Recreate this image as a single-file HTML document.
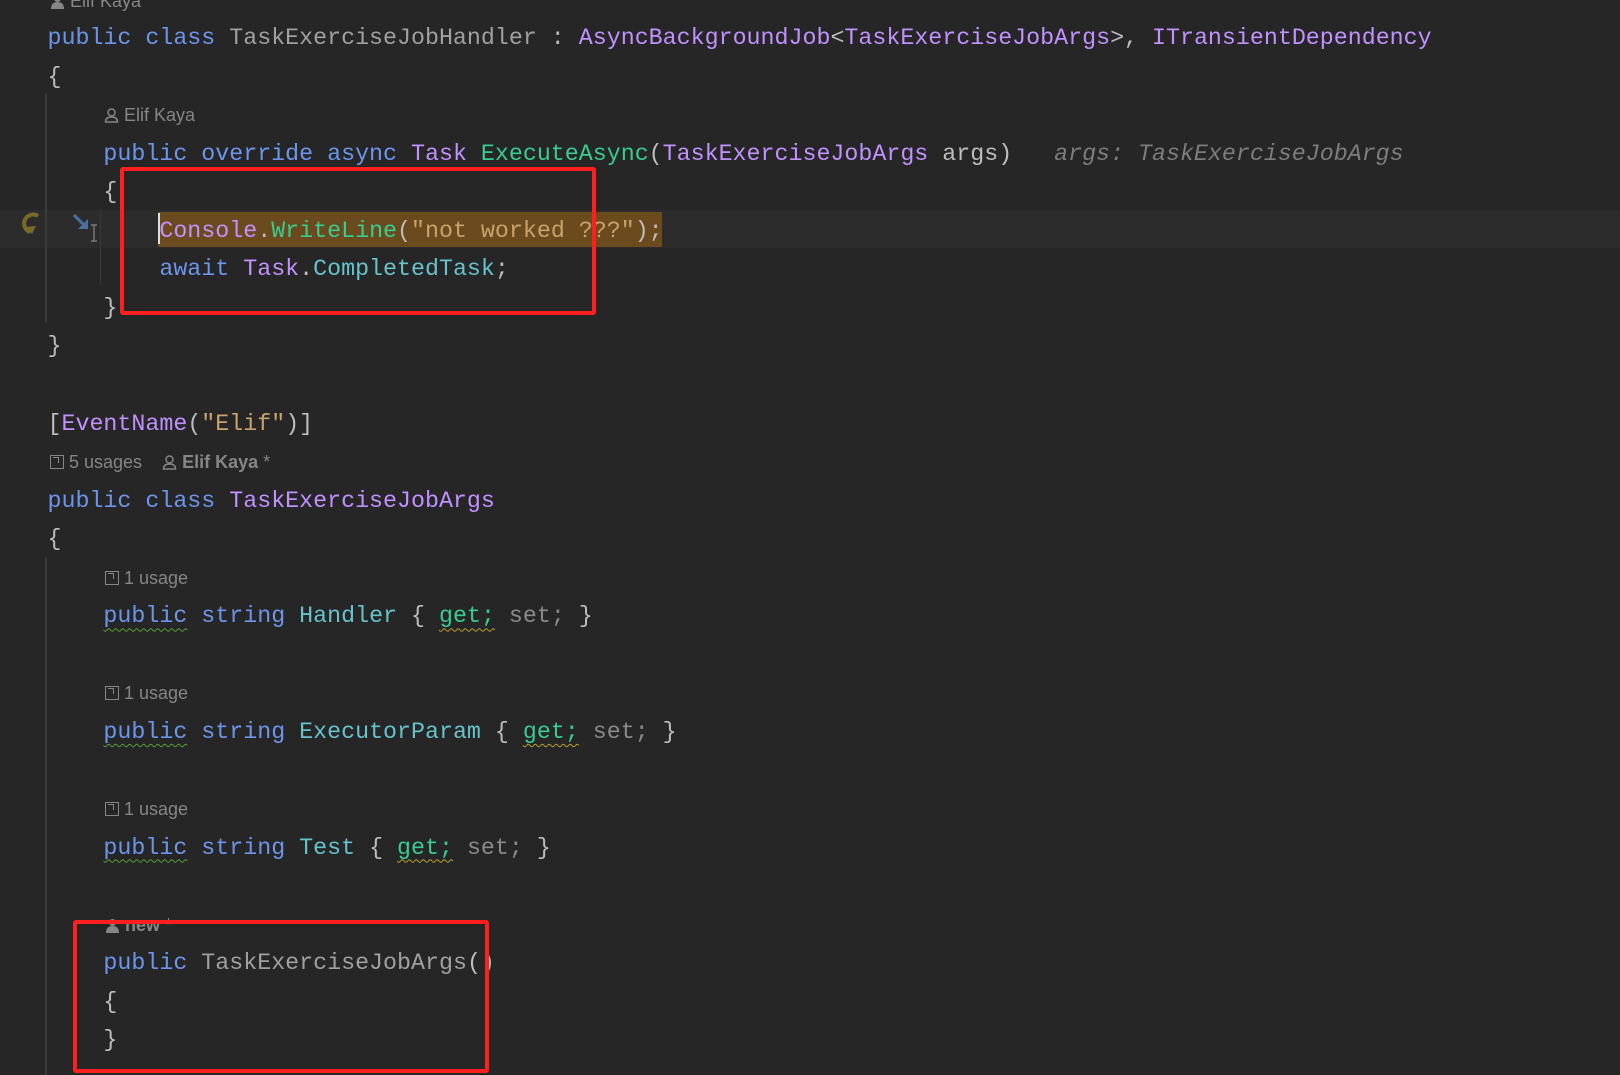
<!DOCTYPE html>
<html><head><meta charset="utf-8"><style>
html,body{margin:0;padding:0;background:#262626;width:1620px;height:1075px;overflow:hidden;position:relative}
.wrap{position:absolute;left:0;top:1.5px;width:1620px;height:1075px}
.l{position:absolute;left:47.5px;height:38.55px;line-height:38.55px;white-space:pre;font-family:"Liberation Mono",monospace;font-size:23.3px;color:#bdbdbd}
.h{font-family:"Liberation Sans",sans-serif;font-size:18px;color:#868686}
.k{color:#6c95eb}.c{color:#c191ff}.m{color:#39cc8f}.s{color:#c9a26d}.p{color:#66c3cc}.g{color:#8a8a8a}.u{color:#a0a0a0}
.w{text-decoration:underline wavy #5a9e3a;text-underline-offset:5px;text-decoration-thickness:1px}
.wy{text-decoration:underline wavy #b5a12e;text-underline-offset:5px;text-decoration-thickness:1px}
.box{position:absolute;border:4px solid #ff1f1f;border-radius:3px;box-sizing:border-box}
.vl{position:absolute;width:2px;background:#3a3a3a}
.ic{display:inline-block;width:14px;height:14px;border:1.5px solid #868686;box-sizing:border-box;vertical-align:-1px;margin-right:5px;position:relative}
.ic:after{content:"";position:absolute;left:2px;top:1px;width:6px;height:6px;border-top:1.5px solid #868686;border-right:1.5px solid #868686;box-sizing:border-box}
.pi{display:inline-block;vertical-align:-2px;margin-right:5px}
</style></head><body>
<div style="position:absolute;left:0;top:210px;width:1620px;height:38px;background:#2c2c2c"></div>
<div style="position:absolute;left:158px;top:212px;width:504px;height:35px;background:#6b4b1e"></div>
<div style="position:absolute;left:158px;top:213px;width:2px;height:31px;background:#e0e0e0"></div>
<div class="vl" style="left:45px;top:94px;height:228px"></div>
<div class="vl" style="left:45px;top:557px;height:518px"></div>
<div class="vl" style="left:100px;top:210px;height:75px;width:1px"></div>
<svg style="position:absolute;left:20px;top:210px" width="28" height="30" viewBox="0 0 28 30"><path d="M18 6 A9 9 0 1 0 10 22" fill="none" stroke="#7a6a28" stroke-width="4"/><path d="M5 17 L12 24 L16 16 Z" fill="#7a6a28"/></svg>
<svg style="position:absolute;left:72px;top:213px" width="34" height="30" viewBox="0 0 34 30"><path d="M2 2 L14 14" stroke="#4a6fa0" stroke-width="3"/><path d="M16 6 L16 16 L6 16 Z" fill="#4a6fa0"/><path d="M22 12 V28 M19 12 H25 M19 28 H25" stroke="#777" stroke-width="1.5" fill="none"/></svg>
<div class="wrap">
<div class="l h" style="top:-20px;left:50px"><svg class="pi" width="15" height="15" viewBox="0 0 15 15"><circle cx="7.5" cy="4.5" r="3.5" fill="#868686"/><path d="M1 15 Q1 8 7.5 8 Q14 8 14 15Z" fill="#868686"/></svg>Elif Kaya</div>
<div class="l" style="top:17.5px"><span class="k">public class</span> <span class="u">TaskExerciseJobHandler</span> : <span class="c">AsyncBackgroundJob</span>&lt;<span class="c">TaskExerciseJobArgs</span>&gt;, <span class="c">ITransientDependency</span></div>
<div class="l" style="top:56px">{</div>
<div class="l h" style="top:94.6px;left:104px"><svg class="pi" width="15" height="15" viewBox="0 0 15 15"><circle cx="7.5" cy="4.5" r="3.5" fill="none" stroke="#868686" stroke-width="1.5"/><path d="M1.5 14 Q1.5 9 7.5 9 Q13.5 9 13.5 14Z" fill="none" stroke="#868686" stroke-width="1.5"/></svg>Elif Kaya</div>
<div class="l" style="top:133.1px">    <span class="k">public override async</span> <span class="c">Task</span> <span class="m">ExecuteAsync</span>(<span class="c">TaskExerciseJobArgs</span> args)  <i class="g" style="color:#7d7d7d"> args: TaskExerciseJobArgs</i></div>
<div class="l" style="top:171.7px">    {</div>
<div class="l" style="top:210.3px">        <span class="c">Console</span>.<span class="m">WriteLine</span>(<span class="s">"not worked ???"</span>);</div>
<div class="l" style="top:248.8px">        <span class="k">await</span> <span class="c">Task</span>.<span class="p">CompletedTask</span>;</div>
<div class="l" style="top:287.4px">    }</div>
<div class="l" style="top:325.9px">}</div>
<div class="l" style="top:403px">[<span class="c">EventName</span>(<span class="s">"Elif"</span>)]</div>
<div class="l h" style="top:441.6px;left:50px"><span class="ic"></span>5 usages &nbsp;&nbsp; <svg class="pi" width="15" height="15" viewBox="0 0 15 15"><circle cx="7.5" cy="4.5" r="3.5" fill="none" stroke="#868686" stroke-width="1.5"/><path d="M1.5 14 Q1.5 9 7.5 9 Q13.5 9 13.5 14Z" fill="none" stroke="#868686" stroke-width="1.5"/></svg><b>Elif Kaya</b> *</div>
<div class="l" style="top:480.2px"><span class="k">public class</span> <span class="c">TaskExerciseJobArgs</span></div>
<div class="l" style="top:518.7px">{</div>
<div class="l h" style="top:557.3px;left:105px"><span class="ic"></span>1 usage</div>
<div class="l" style="top:595.8px">    <span class="k w">public</span> <span class="k">string</span> <span class="p">Handler</span> { <span class="m wy">get;</span> <span class="g">set;</span> }</div>
<div class="l h" style="top:672.9px;left:105px"><span class="ic"></span>1 usage</div>
<div class="l" style="top:711.5px">    <span class="k w">public</span> <span class="k">string</span> <span class="p">ExecutorParam</span> { <span class="m wy">get;</span> <span class="g">set;</span> }</div>
<div class="l h" style="top:788.6px;left:105px"><span class="ic"></span>1 usage</div>
<div class="l" style="top:827.2px">    <span class="k w">public</span> <span class="k">string</span> <span class="p">Test</span> { <span class="m wy">get;</span> <span class="g">set;</span> }</div>
<div class="l h" style="top:904.3px;left:105px"><svg class="pi" width="15" height="15" viewBox="0 0 15 15"><circle cx="7.5" cy="4.5" r="3.5" fill="#868686"/><path d="M1 15 Q1 8 7.5 8 Q14 8 14 15Z" fill="#868686"/></svg><b>new</b> *</div>
<div class="l" style="top:942.8px">    <span class="k">public</span> <span class="u">TaskExerciseJobArgs</span>()</div>
<div class="l" style="top:981.4px">    {</div>
<div class="l" style="top:1019.9px">    }</div>
</div>
<div class="box" style="left:120px;top:167px;width:476px;height:148px"></div>
<div class="box" style="left:73px;top:920px;width:416px;height:153px"></div>
</body></html>
